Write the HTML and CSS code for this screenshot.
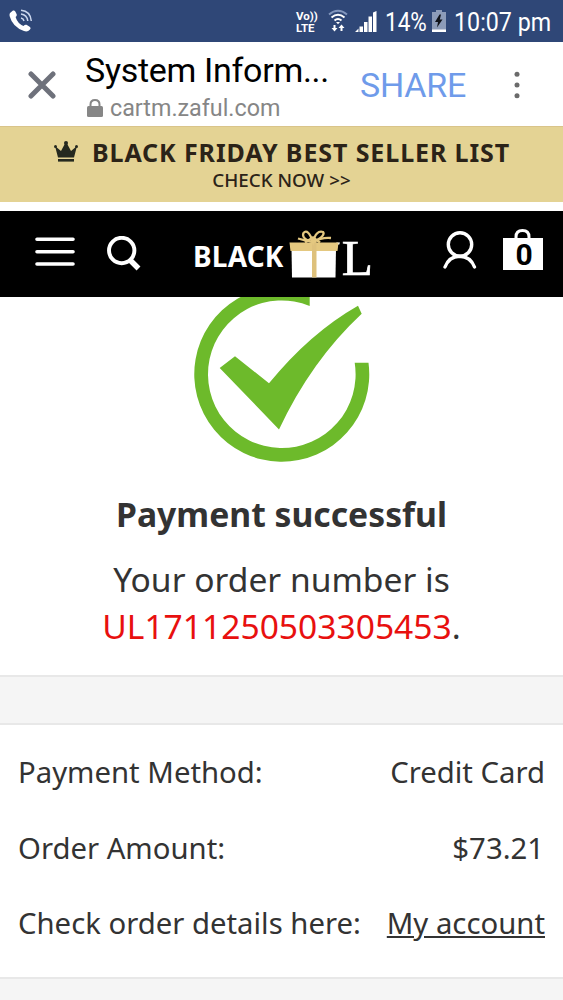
FILE: index.html
```html
<!DOCTYPE html>
<html lang="en">
<head>
    <meta charset="UTF-8">
    <meta name="viewport" content="width=device-width, initial-scale=1.0">
    <title>System Information</title>
    <link rel="stylesheet" href="styles.css">
</head>
<body>
    <div class="status-bar">
        <svg class="call-icon" width="24" height="24" viewBox="0 0 24 24">
            <path d="M1 4 L4 1.500 Q5.500 1 6.300 2.500 L7.800 5.500 Q8 7 6.600 8 Q8.500 14.500 14.500 17 Q16 15.300 17.500 15.800 L21 18 Q22.300 19 21 20.500 Q18.500 23.300 15 22 Q3.500 18 .6 7 Q.3 5 1 4Z" fill="#fff"/>
            <path d="M12 9 Q14.500 9.500 15 12 M12 5 Q18 5.700 18.800 12 M12 1.200 Q21.500 2 22.300 12" fill="none" stroke="#cbd7ee" stroke-width="1.500"/>
        </svg>
        <div class="volte"><span>Vo))</span><span>LTE</span></div>
        <svg class="wifi-icon" width="20" height="24" viewBox="0 0 20 24">
            <g fill="none" stroke-width="2">
                <path d="M1 5.500 Q10 -2 19 5.500" stroke="#8296bd"/>
                <path d="M3.500 8.500 Q10 3 16.500 8.500 M6.500 11.500 Q10 8.500 13.500 11.500" stroke="#fff"/>
            </g>
            <path d="M8 13 H12 L10 15.300Z M5.500 16 H7.500 V19 H9.500 L6.500 22.500 L3.500 19 H5.500Z M12.500 22 H14.500 V19 H16.500 L13.500 15.500 L10.500 19 H12.500Z" fill="#fff"/>
        </svg>
        <svg class="signal-icon" width="22" height="22" viewBox="0 0 22 22">
            <path d="M0 21 L3.500 17.500 V21Z M4.500 15.500 H8 V21 H4.500Z M9 11 H12.500 V21 H9Z M13.500 5.500 H17 V21 H13.500Z M18 1.500 L21.500 0 V21 H18Z" fill="#fff"/>
        </svg>
        <span class="percent">14%</span>
        <svg class="battery-icon" width="14" height="22" viewBox="0 0 14 22">
            <path d="M4 0 H10 V2 H14 V22 H0 V2 H4Z" fill="#8d9cb9"/>
            <path d="M0 19.500 H14 V22 H0Z" fill="#fff"/>
            <path d="M7.500 4.500 L3 12 H6 L5 17.500 L10.500 9.500 H7.800 L9 4.500Z" fill="#10131a"/>
        </svg>
        <span class="clock">10:07 pm</span>
    </div>

    <div class="browser-bar">
        <svg class="close-icon" width="28" height="28" viewBox="0 0 28 28">
            <path d="M3 3 L25 25 M25 3 L3 25" stroke="#6e717b" stroke-width="5" stroke-linecap="round"/>
        </svg>
        <div class="page-info">
            <div class="page-title">System Inform...</div>
            <div class="page-url">
                <svg width="16" height="18" viewBox="0 0 16 18">
                    <rect x="0" y="7" width="16" height="11" rx="1.500" fill="#868686"/>
                    <path d="M3.500 8 V5.500 Q3.500 1 8 1 Q12.500 1 12.500 5.500 V8" fill="none" stroke="#868686" stroke-width="2"/>
                </svg>
                <span>cartm.zaful.com</span>
            </div>
        </div>
        <span class="share">SHARE</span>
        <svg class="more-icon" width="6" height="28" viewBox="0 0 6 28">
            <g fill="#6b6b6b">
                <circle cx="3" cy="3.300" r="2.500"/>
                <circle cx="3" cy="14" r="2.500"/>
                <circle cx="3" cy="24.700" r="2.500"/>
            </g>
        </svg>
    </div>

    <div class="promo">
        <div class="promo-title">
            <svg width="24" height="21" viewBox="0 0 24 21">
                <g fill="#25291f">
                    <path d="M1 5 L7 10 L11.300 2 H12.700 L17 10 L23 5 L20 16.500 H4Z"/>
                    <rect x="4" y="18" width="16" height="2.600"/>
                    <circle cx="1.500" cy="5.500" r="1.500"/>
                    <circle cx="12" cy="2" r="2"/>
                    <circle cx="22.500" cy="5.500" r="1.500"/>
                </g>
            </svg>
            <span>BLACK FRIDAY BEST SELLER LIST</span>
        </div>
        <div class="promo-link">CHECK NOW &gt;&gt;</div>
    </div>

    <div class="navbar">
        <svg class="menu-icon" width="40" height="30" viewBox="0 0 40 30">
            <path d="M2 2.300 H38 M2 14.700 H38 M2 27 H38" stroke="#fff" stroke-width="3.600" stroke-linecap="round"/>
        </svg>
        <svg class="search-icon" width="35" height="36" viewBox="0 0 35 36">
            <circle cx="14.700" cy="14.500" r="12.700" fill="none" stroke="#fff" stroke-width="3.900"/>
            <path d="M23 24 L31.500 32.500" stroke="#fff" stroke-width="5.500"/>
        </svg>
        <div class="logo">
            <span class="logo-black">BLACK</span>
            <svg class="gift" width="52" height="48" viewBox="0 0 52 48">
                <path d="M47 12.500 H51 L50 15Z" fill="#fff"/>
                <path d="M2.500 18 H47 L46.500 47.500 H3Z" fill="#fff"/>
                <path d="M0.500 12.500 H49.500 L48.500 21 H1.500Z" fill="#e4c880"/>
                <rect x="23" y="12" width="4.500" height="35.500" fill="#dec17c"/>
                <g fill="none" stroke="#e4c880" stroke-width="2.300">
                    <path d="M24 12 Q12 9 14.500 3 Q19 -2 24 12 Q27 0 34 2 Q37 6 24 12"/>
                    <path d="M9 8.500 Q14 10 24 12 Q33 7 42 8 M16 12.500 L24 7.500 L31 12.500"/>
                </g>
            </svg>
            <span class="logo-l">L</span>
        </div>
        <svg class="user-icon" width="34" height="38" viewBox="0 0 34 38">
            <g fill="none" stroke="#fff" stroke-width="3.400" stroke-linecap="round">
                <circle cx="17" cy="13.500" r="11.700"/>
                <path d="M2 36 Q6 25.500 16.500 25.200 Q27.500 25.500 31.500 36"/>
            </g>
        </svg>
        <div class="bag">
            <svg width="40" height="41" viewBox="0 0 40 41">
                <path d="M13 11 V8 Q13 1.500 19.500 1.500 Q26 1.500 26 8 V11" fill="none" stroke="#fff" stroke-width="3"/>
                <rect y="9" width="40" height="32" fill="#fff"/>
            </svg>
            <span class="bag-count">0</span>
        </div>
    </div>

    <div class="result">
        <svg class="success-icon" width="176" height="166" viewBox="194 297 176 166">
            <g fill="#6dba2b">
                <path d="M309.700 291.300 A87.500 87.500 0 1 0 368.500 362.700 H354.700 A73.800 73.800 0 1 1 309.700 305.900Z"/>
                <path d="M219.700 367.900 L235 356.200 L269 383.300 Q310 333 358 305.700 L361.700 313.700 Q311 361 279 429.500Z"/>
            </g>
        </svg>
        <h1>Payment successful</h1>
        <p class="order-text">Your order number is</p>
        <p class="order-number"><span class="number">UL1711250503305453</span>.</p>
    </div>

    <div class="details">
        <div class="row"><span>Payment Method:</span><span>Credit Card</span></div>
        <div class="row"><span>Order Amount:</span><span class="amount">$73.21</span></div>
        <div class="row"><span>Check order details here:</span><a class="account-link" href="#">My account</a></div>
    </div>
</body>
</html>
```
FILE: styles.css
```css
* {
    box-sizing: border-box;
}
body {
    margin: 0;
    height: 1000px;
    overflow: hidden;
    background: #f5f5f5;
    color: #333;
    font-family: "Noto Sans", "Open Sans", sans-serif;
}
svg {
    display: block;
    flex: none;
}
span, a, h1, p {
    white-space: nowrap;
}

/* status bar */
.status-bar {
    display: flex;
    height: 42px;
    background: #2f4777;
    color: #fff;
    font-family: Roboto, sans-serif;
    font-size: 25px;
    line-height: 45px;
}
.call-icon {
    margin: 9px 0 0 9px;
}
.volte {
    display: flex;
    flex-direction: column;
    width: 22px;
    margin: 10px 0 0 263px;
    font-size: 11.5px;
    font-weight: bold;
    line-height: 12px;
}
.wifi-icon {
    margin: 9px 0 0 10px;
}
.signal-icon {
    margin: 11px 0 0 7px;
}
.percent {
    width: 42px;
    margin-left: 8px;
    transform: scaleX(0.9);
    transform-origin: left;
}
.battery-icon {
    margin: 10px 0 0 5px;
}
.clock {
    margin-left: 8px;
    transform: scaleX(0.93);
    transform-origin: left;
}

/* in-app browser header */
.browser-bar {
    display: flex;
    height: 84px;
    background: #fff;
    font-family: Roboto, sans-serif;
}
.close-icon {
    margin: 29px 0 0 28px;
}
.page-info {
    width: 246px;
    margin-left: 29px;
    padding-top: 7px;
}
.page-title {
    color: #000;
    font-size: 34px;
    line-height: 42px;
    letter-spacing: -0.3px;
    white-space: nowrap;
}
.page-url {
    display: flex;
    gap: 7px;
    align-items: center;
    margin-left: 2px;
    color: #868686;
    font-size: 23.3px;
    line-height: 34px;
}
.share {
    width: 108px;
    margin-left: 29px;
    color: #6f9bea;
    font-size: 34px;
    line-height: 87px;
    letter-spacing: -0.2px;
}
.more-icon {
    margin: 29px 0 0 46px;
}

/* promo strip */
.promo {
    height: 76px;
    padding-top: 10px;
    background: #e4d394;
    border-top: 1px solid #d9c48a;
    color: #2b2318;
}
.promo-title {
    display: flex;
    gap: 14px;
    margin-left: 54px;
    font-size: 25px;
    font-weight: bold;
    line-height: 31px;
    letter-spacing: 0.9px;
}
.promo-title svg {
    margin-top: 4px;
}
.promo-link {
    text-align: center;
    font-size: 18.8px;
    font-weight: 500;
    line-height: 24px;
}

/* site navigation */
.navbar {
    display: flex;
    height: 86px;
    margin-top: 9px;
    background: #000;
    color: #fff;
    box-shadow: 0 -9px 0 #fff;
}
.menu-icon {
    margin: 26px 0 0 35px;
}
.search-icon {
    margin: 25px 0 0 32px;
}
.logo {
    display: flex;
    width: 180px;
    margin-left: 51px;
}
.logo-black {
    width: 96px;
    font-size: 28px;
    font-weight: bold;
    line-height: 91px;
    letter-spacing: 0.2px;
}
.gift {
    margin-top: 19px;
}
.logo-l {
    margin-left: 1px;
    font-family: "Liberation Serif", serif;
    font-size: 51px;
    line-height: 94px;
    -webkit-text-stroke: 0.7px #fff;
}
.user-icon {
    margin: 20px 0 0 70px;
}
.bag {
    position: relative;
    margin: 18px 0 0 26px;
}
.bag-count {
    position: absolute;
    top: 8px;
    left: 0;
    width: 42px;
    text-align: center;
    color: #000;
    font-family: Roboto, sans-serif;
    font-size: 30px;
    font-weight: bold;
    line-height: 35px;
}

/* payment result */
.result {
    height: 380px;
    background: #fff;
    border-bottom: 2px solid #e8e8e8;
    text-align: center;
}
.success-icon {
    margin-left: 194px;
}
h1 {
    margin: 30px 0 0;
    font-size: 33.7px;
    line-height: 42px;
}
p {
    margin: 0;
    font-size: 33.6px;
    line-height: 47px;
}
.order-text {
    margin-top: 21px;
}
.number {
    color: #e8100f;
}

/* order details */
.details {
    height: 256px;
    margin-top: 46px;
    padding: 11px 18px 0;
    border-top: 2px solid #e8e8e8;
    border-bottom: 2px solid #e8e8e8;
    background: #fff;
}
.row {
    display: flex;
    justify-content: space-between;
    height: 75.5px;
    font-size: 29.3px;
    line-height: 72px;
}
.amount {
    padding-right: 1px;
}
.account-link {
    color: #333;
    text-decoration: underline;
}
```
